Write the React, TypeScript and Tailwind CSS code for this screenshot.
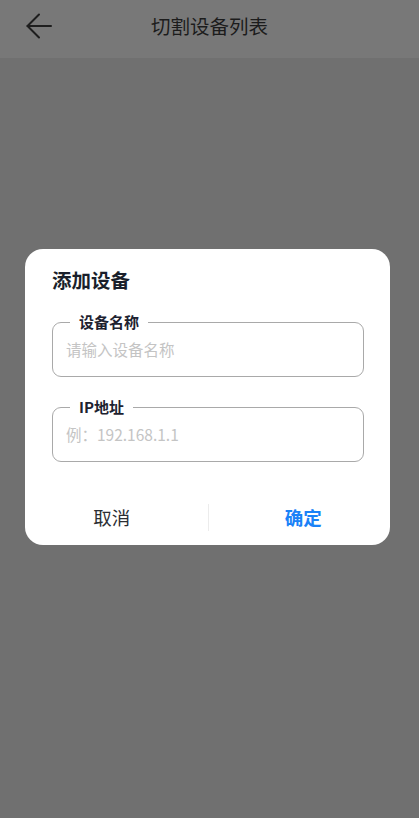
import React from 'react';

const font = { fontFamily: '"Noto Sans CJK SC", "Noto Sans", sans-serif' };

const Field = ({ label, placeholder }: { label: string; placeholder: string }) => (
  <fieldset className="border border-[#a9a9a9] rounded-[9px] px-[13px] pb-[10px]">
    <legend className="ml-[4px] px-[9px] text-[15px] leading-[20px] font-bold text-[#1d2230]">{label}</legend>
    <input
      className="w-full h-[34px] bg-transparent outline-none text-[15.5px] text-[#333] placeholder:text-[#c4c4c4]"
      placeholder={placeholder}
      style={font}
    />
  </fieldset>
);

const App = () => {
  return (
    <div className="w-[419px] h-[818px] overflow-hidden bg-[#707070] flex flex-col" style={font}>
      {/* Header (dimmed by the dialog overlay) */}
      <header className="h-[58px] bg-[#787878] flex items-center pb-[6px] shrink-0">
        <div className="w-[60px] pl-[26px] flex items-center">
          <svg width="26" height="26" viewBox="0 0 26 26" fill="none" stroke="#1e1e1e" strokeWidth="2" strokeLinecap="round" strokeLinejoin="round">
            <path d="M1.5 13H25" />
            <path d="M13 1.5 1.5 13 13 24.5" />
          </svg>
        </div>
        <h1 className="flex-1 text-center text-[19.5px] leading-[26px] text-[#1c1c1c]">切割设备列表</h1>
        <div className="w-[60px]" />
      </header>

      {/* Dialog */}
      <div className="pt-[191px] pl-[25px] pr-[29px]">
        <div className="bg-white rounded-[18px]">
          <div className="pl-[27px] pr-[26px] pt-[18px]">
            <h2 className="text-[19.5px] leading-[26px] font-bold text-[#1a1f2b] mb-[19px]">添加设备</h2>
            <div className="flex flex-col gap-[20px]">
              <Field label="设备名称" placeholder="请输入设备名称" />
              <Field label="IP地址" placeholder="例：192.168.1.1" />
            </div>
          </div>
          <div className="mt-[28px] h-[55px] flex items-center">
            <button className="flex-1 h-full pr-[9px] text-[18.5px] text-[#2b2e33]">取消</button>
            <div className="w-px h-[27px] bg-[#ececec]" />
            <button className="flex-1 h-full pl-[8px] text-[18.5px] font-bold text-[#1a82f7]">确定</button>
          </div>
        </div>
      </div>
    </div>
  );
};

export default App;
